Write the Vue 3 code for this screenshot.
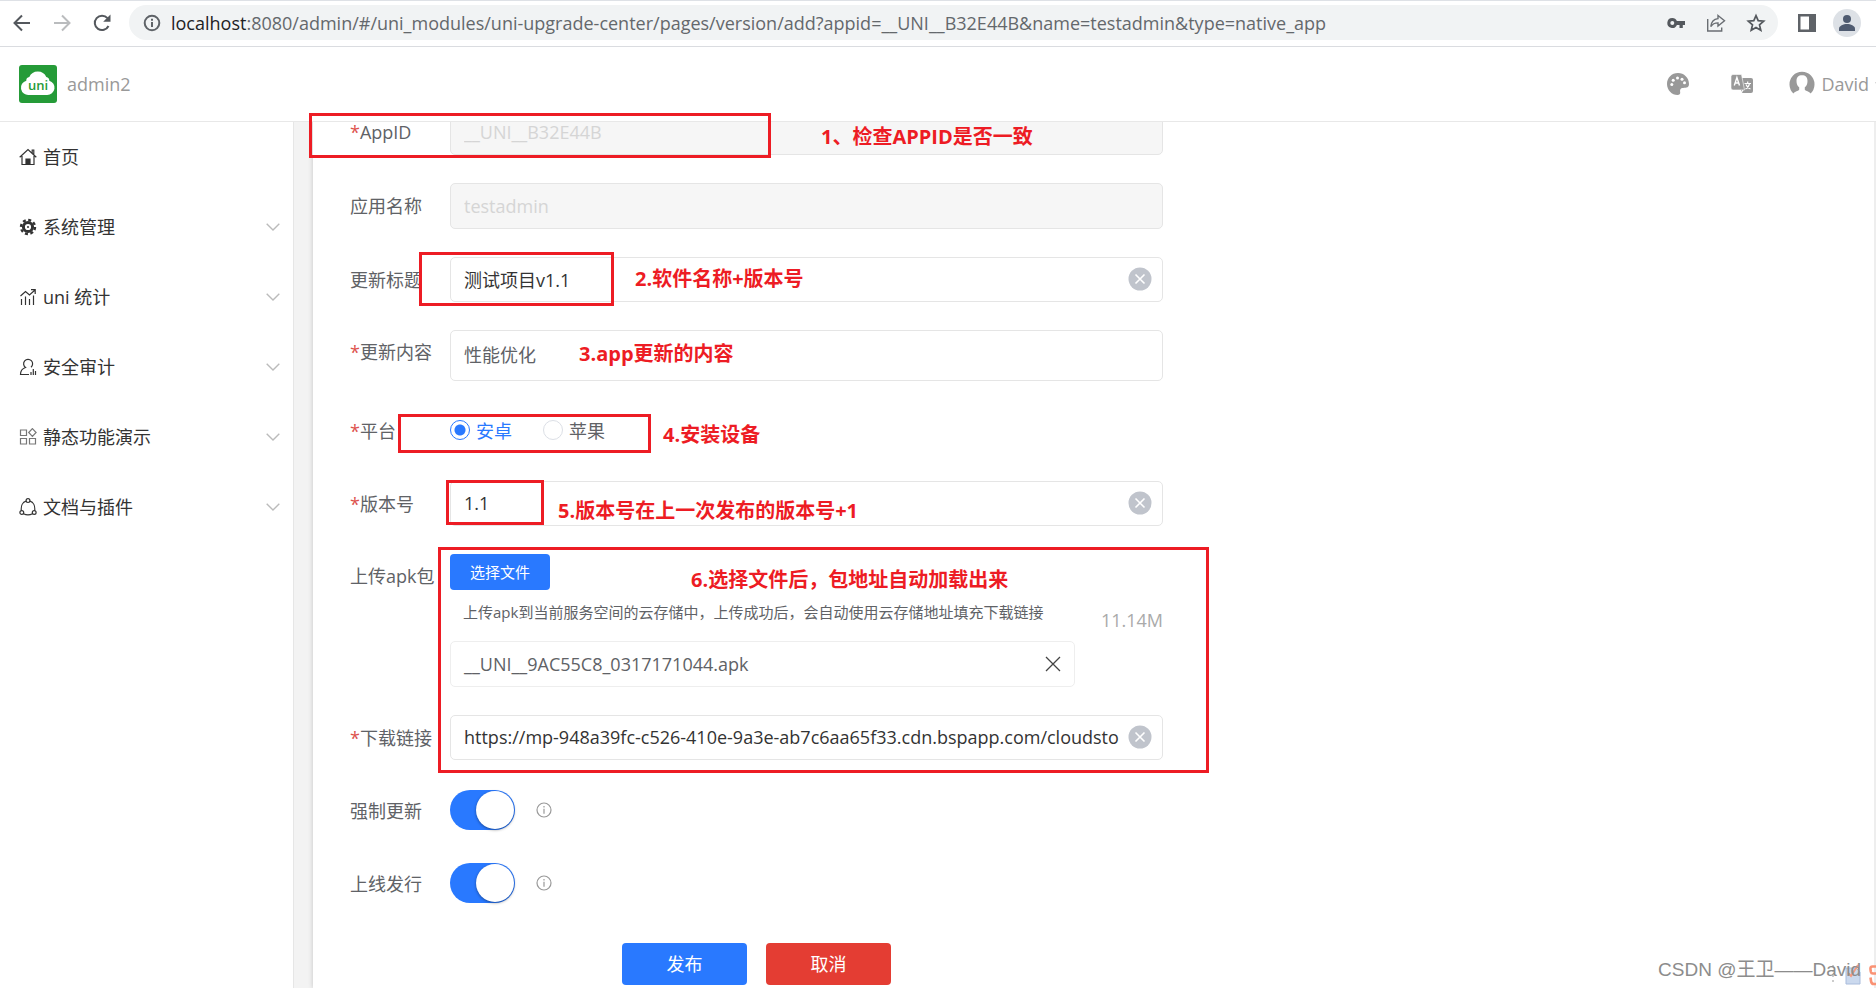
<template>
  <div class="page">
    <!-- Browser toolbar -->
    <div class="browser">
      <button class="nav-btn" type="button" aria-label="后退">
        <svg width="20" height="20" viewBox="0 0 20 20" fill="none" stroke="#54585d" stroke-width="2"><path d="M18 10H3M10 2.500L2.500 10l7.500 7.500" /></svg>
      </button>
      <button class="nav-btn" type="button" aria-label="前进">
        <svg width="20" height="20" viewBox="0 0 20 20" fill="none" stroke="#babcbe" stroke-width="2"><path d="M2 10h15M10 2.500l7.500 7.500-7.500 7.500" /></svg>
      </button>
      <button class="nav-btn" type="button" aria-label="刷新">
        <svg width="20" height="20" viewBox="0 0 20 20" fill="none" stroke="#54585d" stroke-width="2"><path d="M16.500 13A7.200 7.200 0 1 1 15.500 5.200" /><path d="M18.500 1.500v7.300h-7.300z" fill="#54585d" stroke="none" /></svg>
      </button>
      <div class="address">
        <svg width="18" height="18" viewBox="0 0 18 18" fill="none" stroke="#5f6368" stroke-width="2"><circle cx="9" cy="9" r="7.300" /><path d="M9 8v5M9 4.800v2" /></svg>
        <div class="url"><span class="host">localhost</span>{{ urlRest }}</div>
        <button class="address-btn" type="button" aria-label="密码">
          <svg width="20" height="20" viewBox="0 0 20 20"><path fill="#54585d" fill-rule="evenodd" d="M6.300 5a5 5 0 1 0 4.600 7h2.600v3h3.300v-3H19V8h-8.100A5 5 0 0 0 6.300 5zm0 3a2 2 0 1 1 0 4 2 2 0 0 1 0-4z" /></svg>
        </button>
        <button class="address-btn" type="button" aria-label="分享">
          <svg width="20" height="20" viewBox="0 0 20 20" fill="none" stroke="#6a6e73" stroke-width="1.400"><path d="M1.700 6v12h14v-3.500" /><path d="M12 2.500l6.500 5.300-6.500 5.300v-3.200c-3.500 0-5.500 1-7.200 3.700.4-4.300 3-7.500 7.200-8z" /></svg>
        </button>
        <button class="address-btn" type="button" aria-label="收藏">
          <svg width="20" height="20" viewBox="0 0 20 20" fill="none" stroke="#54585d" stroke-width="1.700"><path d="M10 2.600l2.200 5.100 5.500.5-4.200 3.700 1.300 5.400-4.800-2.900-4.800 2.900 1.300-5.400-4.200-3.700 5.500-.5z" /></svg>
        </button>
      </div>
      <button class="nav-btn side-btn" type="button" aria-label="侧边栏">
        <svg width="18" height="18" viewBox="0 0 18 18"><path fill="#5f6368" fill-rule="evenodd" d="M0 0h18v18H0zM2.500 2.500v13h8.500v-13z" /></svg>
      </button>
      <button class="nav-btn" type="button" aria-label="用户">
        <svg width="28" height="28" viewBox="0 0 28 28"><circle cx="14" cy="14" r="14" fill="#dde1e6" /><circle cx="14" cy="10" r="4" fill="#4f5b70" /><path d="M6 22v-2.500c0-2.700 4.500-4.500 8-4.500s8 1.800 8 4.500V22z" fill="#4f5b70" /></svg>
      </button>
    </div>

    <!-- App header -->
    <header class="header">
      <a class="brand" href="#/">
        <svg width="38" height="38" viewBox="0 0 38 38">
          <rect width="38" height="38" rx="3" fill="#259b38" />
          <path d="M10 30a7.300 7.300 0 0 1-2.700-14.300 3.500 3.500 0 0 1 3-3.700 9.300 9.300 0 0 1 17 0c2 .3 3 1.800 3 3.700A7.300 7.300 0 0 1 28 30z" fill="#fff" />
          <text x="19" y="25" text-anchor="middle" class="logo-text">uni</text>
        </svg>
        <span>admin2</span>
      </a>
      <div class="tools">
        <button class="tool" type="button" aria-label="主题">
          <svg width="24" height="24" viewBox="0 0 24 24"><path fill="#999" d="M12 1C5.700 1 1 5.900 1 12s4.900 11 10.500 11c2 0 2.900-1.200 2.700-2.800-.2-1.500-.3-3.700 2-4.200 2.500-.4 6.800.6 6.800-4C23 5.700 18 1 12 1z" /><g fill="#fff"><circle cx="5.800" cy="12.500" r="1.500" /><circle cx="7.200" cy="8.300" r="1.500" /><circle cx="11.500" cy="6" r="1.500" /><circle cx="16" cy="7.300" r="1.500" /><circle cx="18.500" cy="10.800" r="1.500" /></g></svg>
        </button>
        <button class="tool" type="button" aria-label="语言">
          <svg width="24" height="24" viewBox="0 0 24 24"><rect x="11" y="6" width="12" height="15" rx="2" fill="#999" /><path d="M3 2.500h8.500l3 15.500H3a2 2 0 0 1-2-2v-11.500a2 2 0 0 1 2-2z" fill="#999" stroke="#fff" stroke-width=".6" /><path d="M4.300 13.500l2.600-8 2.600 8M5.200 11h3.400" fill="none" stroke="#fff" stroke-width="1.400" /><path d="M14.500 11.500h6.500M17.700 9.500v2M19.500 11.500c-.5 2.500-2 4.500-4 5.500M16 12.500c.8 2.200 2.500 3.800 4.500 4.500M10 18l1 3 2-3" fill="none" stroke="#fff" stroke-width="1.200" /></svg>
        </button>
        <button class="user" type="button">
          <svg width="26" height="26" viewBox="0 0 26 26"><path d="M4.500 22.500A12.500 12.500 0 1 1 21.500 22.500C20.500 20.500 16.500 20 15.800 18.800v-2.500c1.800-1.300 2.700-3.300 2.700-6.300 0-3.700-2-5.700-5.500-5.700S7.500 6.300 7.500 10c0 3 .9 5 2.700 6.300v2.500C9.500 20 5.500 20.500 4.500 22.500z" fill="#999" /></svg>
          <span>David</span>
          <svg width="12" height="8" viewBox="0 0 12 8"><path d="M0 2.500h10L5 7z" fill="#999" /></svg>
        </button>
      </div>
    </header>

    <div class="body">
      <!-- Sidebar -->
      <nav class="sidebar">
        <ul>
          <li v-for="item in menu" :key="item.label">
            <a href="#/" @click.prevent="toggle(item)">
              <svg class="menu-icon" width="18" height="18" viewBox="0 0 18 18" fill="none" stroke="#333" stroke-width="1.200" v-html="item.icon"></svg>
              <span class="menu-label">{{ item.label }}</span>
              <svg v-if="item.children" class="chevron" width="14" height="8" viewBox="0 0 14 8" fill="none" stroke="#bbb" stroke-width="1.400"><path d="M.7.7L7 7l6.300-6.300" /></svg>
            </a>
          </li>
        </ul>
      </nav>

      <!-- Version form -->
      <main class="content">
        <form class="form" @submit.prevent>
          <div class="row">
            <label class="label" for="appid"><i>*</i>AppID</label>
            <input id="appid" class="field" type="text" :value="form.appid" disabled />
          </div>
          <div class="row">
            <label class="label" for="name">应用名称</label>
            <input id="name" class="field" type="text" :value="form.name" disabled />
          </div>
          <div class="row">
            <label class="label" for="title">更新标题</label>
            <div class="field clearable">
              <input id="title" v-model="form.title" type="text" />
              <button class="clear" type="button" aria-label="清除" @click="form.title = ''">
                <svg width="24" height="24" viewBox="0 0 24 24"><circle cx="12" cy="12" r="11.500" fill="#c0c4cc" /><path d="M7.500 7.500l9 9M16.500 7.500l-9 9" stroke="#fff" stroke-width="1.600" /></svg>
              </button>
            </div>
          </div>
          <div class="row row-top">
            <label class="label" for="contents"><i>*</i>更新内容</label>
            <textarea id="contents" v-model="form.contents" class="field" rows="1"></textarea>
          </div>
          <div class="row">
            <span class="label"><i>*</i>平台</span>
            <div class="radios">
              <label v-for="p in platforms" :key="p" class="radio" :class="{ checked: form.platform === p }">
                <input v-model="form.platform" type="radio" name="platform" :value="p" />{{ p }}
              </label>
            </div>
          </div>
          <div class="row">
            <label class="label" for="version"><i>*</i>版本号</label>
            <div class="field clearable">
              <input id="version" v-model="form.version" type="text" />
              <button class="clear" type="button" aria-label="清除" @click="form.version = ''">
                <svg width="24" height="24" viewBox="0 0 24 24"><circle cx="12" cy="12" r="11.500" fill="#c0c4cc" /><path d="M7.500 7.500l9 9M16.500 7.500l-9 9" stroke="#fff" stroke-width="1.600" /></svg>
              </button>
            </div>
          </div>
          <div class="row row-top">
            <span class="label">上传apk包</span>
            <div class="upload">
              <div class="upload-main">
                <button class="btn btn-small" type="button">选择文件</button>
                <p class="tip">上传apk到当前服务空间的云存储中，上传成功后，会自动使用云存储地址填充下载链接</p>
                <div class="file">
                  <span>__UNI__9AC55C8_0317171044.apk</span>
                  <button class="clear" type="button" aria-label="删除文件">
                    <svg width="16" height="16" viewBox="0 0 16 16" fill="none" stroke="#444" stroke-width="1.300"><path d="M1 1l14 14M15 1L1 15" /></svg>
                  </button>
                </div>
              </div>
              <span class="size">11.14M</span>
            </div>
          </div>
          <div class="row">
            <label class="label" for="url"><i>*</i>下载链接</label>
            <div class="field clearable">
              <input id="url" v-model="form.url" type="text" />
              <button class="clear" type="button" aria-label="清除" @click="form.url = ''">
                <svg width="24" height="24" viewBox="0 0 24 24"><circle cx="12" cy="12" r="11.500" fill="#c0c4cc" /><path d="M7.500 7.500l9 9M16.500 7.500l-9 9" stroke="#fff" stroke-width="1.600" /></svg>
              </button>
            </div>
          </div>
          <div v-for="s in switches" :key="s.key" class="row">
            <label class="label" :for="s.key">{{ s.label }}</label>
            <div class="switch-wrap">
              <input :id="s.key" v-model="form[s.key]" class="switch" type="checkbox" role="switch" />
              <svg width="16" height="16" viewBox="0 0 16 16" fill="none" stroke="#999" stroke-width="1.200"><circle cx="8" cy="8" r="7" /><path d="M8 6.700v5M8 4v1.500" /></svg>
            </div>
          </div>
          <div class="actions">
            <button class="btn" type="submit">发布</button>
            <button class="btn btn-danger" type="button">取消</button>
          </div>
        </form>
      </main>
    </div>

    <!-- Annotations over the form -->
    <div class="notes">
      <div class="box box-1"></div>
      <div class="box box-2"></div>
      <div class="box box-4"></div>
      <div class="box box-5"></div>
      <div class="box box-6"></div>
      <span v-for="(note, i) in notes" :key="note" class="note" :class="'note-' + (i + 1)">{{ note }}</span>
    </div>

    <div class="ime">
      <svg width="46" height="24" viewBox="0 0 46 24">
        <path d="M3 2v20" stroke="#ccc" stroke-width="2" stroke-dasharray="2 3" />
        <path d="M16 5h10l4 4v12H16z" fill="#cbd9ee" stroke="#a9bcdc" />
        <path d="M18 10l3 3 7-11" fill="none" stroke="#f59a80" stroke-width="2" />
        <path d="M46 3.500h-3.500q-2.500 0-2 3l.4 2.500q.3 1.500 2 1.500H46M40.500 14.500l.6 4q.4 2.500 2.900 2.500h2" fill="none" stroke="#fa9274" stroke-width="2.600" />
      </svg>
    </div>
    <div class="watermark">CSDN @王卫——David</div>
  </div>
</template>

<script setup>
import { reactive } from 'vue'

const urlRest = ':8080/admin/#/uni_modules/uni-upgrade-center/pages/version/add?appid=__UNI__B32E44B&name=testadmin&type=native_app'

const menu = reactive([
  { label: '首页', children: false, icon: '<path d="M.7 9.300L9 1.500l8.300 7.800M3 8v8.500h12V8M13.200 5V2h1.600v4.500"/><path d="M7 16.500V11h4v5.500z" fill="#333"/>' },
  { label: '系统管理', children: true, icon: '<circle cx="9" cy="9" r="4.600" stroke-width="3"/><circle cx="9" cy="9" r="7" stroke-width="2.400" stroke-dasharray="3 2.500"/><circle cx="9" cy="9" r="1" fill="#333" stroke="none"/>' },
  { label: 'uni 统计', children: true, icon: '<path d="M2.500 11v6M6.500 8.500V17M10.500 11v6M14.500 7.500V17M1.500 8l5-4.500 4 3.500 5.500-5M12 1.700h4.200V6"/>' },
  { label: '安全审计', children: true, icon: '<path d="M10 16.500H1.500c0-4 2-6 5-7A4.500 4.500 0 1 1 12 9.300M12 14v3M14.300 11v6M16.500 13v4"/>' },
  { label: '静态功能演示', children: true, icon: '<path stroke="#777" d="M1.500 2h6v5.500h-6zM1.500 10.500h6V16h-6zM10.500 10.500h6V16h-6zM13.400.6l3.700 3.900-3.700 3.900-3.700-3.900z"/>' },
  { label: '文档与插件', children: true, icon: '<circle cx="9" cy="2.600" r="1.900"/><circle cx="2.800" cy="14.500" r="1.900"/><circle cx="15.200" cy="14.500" r="1.900"/><path d="M7 3.200c-3.400 1-5.200 5-4.700 9.300M11 3.200c3.400 1 5.200 5 4.700 9.300M4.500 15.800c3 1.500 6 1.500 9 0"/>' },
])

const platforms = ['安卓', '苹果']

const switches = [
  { key: 'mandatory', label: '强制更新' },
  { key: 'publish',   label: '上线发行' },
]

const notes = [
  '1、检查APPID是否一致',
  '2.软件名称+版本号',
  '3.app更新的内容',
  '4.安装设备',
  '5.版本号在上一次发布的版本号+1',
  '6.选择文件后，包地址自动加载出来',
]

const form = reactive({
  appid: '__UNI__B32E44B',
  name: 'testadmin',
  title: '测试项目v1.1',
  contents: '性能优化',
  platform: '安卓',
  version: '1.1',
  url: 'https://mp-948a39fc-c526-410e-9a3e-ab7c6aa65f33.cdn.bspapp.com/cloudstorage/',
  mandatory: true,
  publish: true,
})

function toggle(item) {
  item.open = !item.open
}
</script>

<style>
body { background: #fff; }
</style>

<style scoped>
.page {
  position: relative;
  display: flex;
  flex-direction: column;
  height: 100vh;
  overflow: hidden;
  font-family: "Open Sans", "Noto Sans CJK SC", sans-serif;
  font-size: 18px;
  color: #606266;
}
.page * { box-sizing: border-box; }
svg { display: block; flex: none; }
button, input, textarea { font: inherit; }
button { border: 0; padding: 0; background: none; cursor: pointer; }

/* Browser toolbar */
.browser {
  display: flex;
  align-items: center;
  flex: none;
  height: 47px;
  gap: 20px;
  padding: 0 15px 2px 12px;
  border-top: 1px solid #dee1e6;
  border-bottom: 1px solid #dadce0;
}
.address {
  display: flex;
  align-items: center;
  flex: 1;
  min-width: 0;
  height: 35px;
  gap: 20px;
  margin-left: -3px;
  padding: 0 12px 0 14px;
  border-radius: 18px;
  background: #f1f3f4;
}
.url {
  flex: 1;
  min-width: 0;
  margin-left: -10px;
  overflow: hidden;
  white-space: nowrap;
  color: #64686c;
}
.host { color: #202124; }
.side-btn { margin-right: -3px; }

/* App header */
.header {
  display: flex;
  align-items: center;
  justify-content: space-between;
  flex: none;
  height: 75px;
  padding-left: 19px;
  border-bottom: 1px solid #e8e8e8;
  color: #999;
}
.brand {
  display: flex;
  align-items: center;
  gap: 10px;
  color: #999;
  text-decoration: none;
}
.logo-text { font-size: 13px; font-weight: 600; fill: #259b38; }
.tools { display: flex; align-items: center; gap: 40px; }
.user {
  display: flex;
  align-items: center;
  gap: 6px;
  margin-left: -5px;
  margin-right: -11px;
  color: #999;
}

.body { display: flex; flex: 1; min-height: 0; }

/* Sidebar */
.sidebar {
  flex: none;
  width: 294px;
  border-right: 1px solid #e6e6e6;
}
.sidebar ul { margin: 0; padding: 0; list-style: none; }
.sidebar a {
  display: flex;
  align-items: center;
  height: 70px;
  gap: 6px;
  padding: 0 13px 1px 19px;
  color: #333;
  text-decoration: none;
}
.menu-label { flex: 1; padding-bottom: 1px; }

/* Form */
.content {
  flex: 1;
  min-width: 0;
  overflow: hidden;
  padding-left: 19px;
  border-right: 2px solid #eee;
  background: #f3f3f3;
}
.form {
  min-height: 100%;
  margin-top: -13px;
  padding-left: 37px;
  background: #fff;
  box-shadow: 0 0 5px rgba(0, 0, 0, 0.2);
}
.row {
  display: flex;
  align-items: center;
  max-width: 813px;
  margin-bottom: 28px;
}
.row-top { align-items: flex-start; }
.label {
  flex: none;
  width: 100px;
  line-height: 20px;
  white-space: nowrap;
}
.row-top .label { padding-top: 12px; }
.label i { font-style: normal; color: #dd524d; }
.field {
  flex: 1;
  min-width: 0;
  height: 46px;
  padding: 0 13px;
  border: 1px solid #e5e5e5;
  border-radius: 5px;
  background: #fff;
  color: #333;
}
.field:disabled { background: #f6f6f6; color: #d5d5d5; }
textarea.field {
  height: 51px;
  padding-top: 11px;
  line-height: 26px;
  resize: none;
  color: #606266;
}
.clearable {
  display: flex;
  align-items: center;
  height: 45px;
  gap: 9px;
  padding: 0 10px 2px 13px;
}
.clearable input {
  flex: 1;
  min-width: 0;
  padding: 0;
  border: 0;
  outline: 0;
  background: none;
  color: #333;
}

.radios { display: flex; gap: 31px; height: 44px; padding-bottom: 2px; }
.radio { display: flex; align-items: center; gap: 6px; }
.radio input {
  width: 20px;
  height: 20px;
  margin: 0;
  appearance: none;
  border: 1px solid #dcdfe6;
  border-radius: 50%;
}
.radio.checked { color: #2979ff; }
.radio.checked input {
  border-color: #2979ff;
  background: radial-gradient(circle, #2979ff 5px, #fff 6px);
}

.upload {
  display: flex;
  align-items: center;
  justify-content: space-between;
  flex: 1;
}
.upload-main { width: 625px; }
.tip {
  margin: 0;
  padding: 11px 0 17px 13px;
  font-size: 15px;
  line-height: 23px;
  white-space: nowrap;
}
.file {
  display: flex;
  align-items: center;
  justify-content: space-between;
  height: 46px;
  padding: 0 13px;
  border: 1px solid #eee;
  border-radius: 5px;
}
.size { padding-bottom: 2px; color: #aaa; }

.switch-wrap { display: flex; align-items: center; height: 45px; gap: 21px; padding-bottom: 1px; }
.switch {
  width: 65px;
  height: 40px;
  margin: 0;
  appearance: none;
  border-radius: 20px;
  background: #dfdfdf;
}
.switch::before {
  content: "";
  display: block;
  width: 38px;
  height: 38px;
  margin: 1px;
  border-radius: 50%;
  background: #fff;
  box-shadow: 0 1px 3px rgba(0, 0, 0, 0.4);
}
.switch:checked { background: #2979ff; }
.switch:checked::before { margin-left: 26px; }

.btn {
  width: 125px;
  height: 42px;
  padding-bottom: 2px;
  border-radius: 4px;
  background: #2979ff;
  color: #fff;
}
.btn-small { width: 100px; height: 36px; font-size: 15px; }
.btn-danger { background: #e43d33; }
.actions {
  display: flex;
  justify-content: center;
  gap: 19px;
  max-width: 813px;
  padding: 9px 0 3px;
}

/* Annotations */
.box { position: absolute; border: 3px solid #ed1c24; }
.box-1 { left: 309px; top: 113px; width: 462px; height: 45px; }
.box-2 { left: 419px; top: 252px; width: 195px; height: 54px; }
.box-4 { left: 398px; top: 414px; width: 253px; height: 39px; }
.box-5 { left: 446px; top: 480px; width: 98px; height: 45px; }
.box-6 { left: 438px; top: 547px; width: 771px; height: 226px; }
.note {
  position: absolute;
  font-size: 20px;
  font-weight: 700;
  line-height: 28px;
  white-space: nowrap;
  color: #ed1c24;
}
.note-1 { left: 821px; top: 123px; }
.note-2 { left: 635px; top: 265px; }
.note-3 { left: 579px; top: 340px; }
.note-4 { left: 663px; top: 421px; }
.note-5 { left: 558px; top: 497px; }
.note-6 { left: 691px; top: 566px; }

.ime { position: absolute; right: 0; bottom: 1px; }
.watermark {
  position: absolute;
  right: 15px;
  bottom: 4px;
  font-family: "Liberation Sans", "Noto Sans CJK SC", sans-serif;
  font-size: 19px;
  line-height: 28px;
  color: #8c8c8c;
}
</style>
